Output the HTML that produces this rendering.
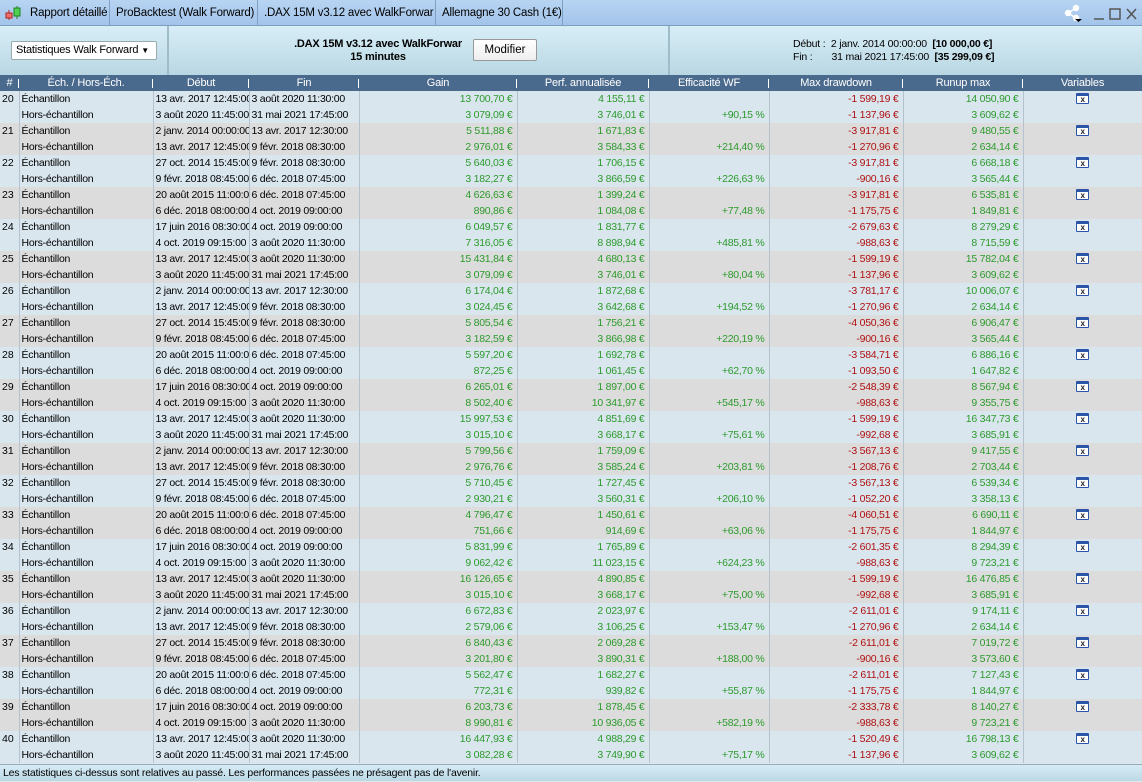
<!DOCTYPE html>
<html><head><meta charset="utf-8"><style>
*{box-sizing:border-box;margin:0;padding:0}
body{width:1142px;height:781px;overflow:hidden;font-family:"Liberation Sans",Arial,sans-serif;font-size:11px;color:#000;background:#dce8ee;position:relative}
#tabs{position:absolute;left:0;top:0;width:1142px;height:26px;background:linear-gradient(#b7d4f2,#a3c4ea);border-bottom:1px solid #7c9cc0}
.tab{position:absolute;top:0;height:25px;line-height:26px;font-size:11.5px;letter-spacing:-0.2px;white-space:nowrap;overflow:hidden;border-right:1px solid #7f9fc4;padding-left:6px;color:#000}
#panel{position:absolute;left:0;top:26px;width:1142px;height:49px;background:linear-gradient(#d8eef7,#b9d7e3)}
.pbox{position:absolute;top:0;height:49px;border-right:2px solid #9fbccb}
#sel{position:absolute;left:11px;top:15px;width:146px;height:19px;background:#fff;border:1px solid #9aa;border-radius:2px;font-size:11px;letter-spacing:-0.2px;white-space:nowrap;line-height:17px;padding-left:4px}
#btn{position:absolute;top:13px;width:64px;height:22px;background:linear-gradient(#fff,#eee);border:1px solid #999;border-radius:2px;font-size:11.5px;line-height:20px;text-align:center}
table{position:absolute;left:0;top:75px;border-collapse:collapse;table-layout:fixed;width:1142px}
th{height:16px;background:#4a6a8d;color:#fff;font-weight:normal;font-size:11px;letter-spacing:-0.2px;line-height:16px;text-align:center;position:relative;white-space:nowrap}
th:after{content:"";position:absolute;right:0;top:4px;width:1px;height:9px;background:#fff}
th:last-child:after{display:none}
td{height:16px;line-height:16px;padding:0 2px;white-space:nowrap;overflow:hidden;border-left:1px solid #b3c2cc;font-size:10.5px;letter-spacing:-0.25px}
td.r{text-align:right;padding-right:4px}
tr.a td{background:#d9e6ee}
tr.b td{background:#dcdcdc}
.g{color:#2c9a2c}.d{color:#b01010}
td.n{vertical-align:top;padding-left:2px;border-left:none;letter-spacing:0}
.ic{display:inline-block;width:13px;height:11px;border:1px solid #2b55a8;border-top:3px solid #2b55a8;background:#fff;vertical-align:middle;margin-top:-2px;font-size:8px;line-height:7px;text-align:center;font-weight:bold;color:#222;border-radius:1px;letter-spacing:0}
#foot{position:absolute;left:0;top:764px;width:1142px;height:17px;background:linear-gradient(#d6ecf6,#bcd8e6);border-top:1px solid #9ab;font-size:10.5px;letter-spacing:-0.2px;line-height:17px;padding-left:3px;white-space:nowrap}
</style></head><body>
<div id="tabs">
<svg style="position:absolute;left:4px;top:5px" width="18" height="16"><line x1="5" y1="5" x2="5" y2="15" stroke="#b02020"/><rect x="2" y="8" width="6" height="5" fill="#f07070" stroke="#b02020"/><line x1="13" y1="1" x2="13" y2="14" stroke="#208020"/><rect x="10" y="3" width="6" height="8" fill="#50d050" stroke="#208020"/></svg>
<div class="tab" style="left:24px;width:86px">Rapport détaillé</div>
<div class="tab" style="left:110px;width:148px">ProBacktest (Walk Forward)</div>
<div class="tab" style="left:258px;width:178px">.DAX 15M v3.12 avec WalkForwar</div>
<div class="tab" style="left:436px;width:127px">Allemagne 30 Cash (1€)</div>
<svg style="position:absolute;left:1064px;top:4px" width="78" height="18"><g stroke="#fff" stroke-width="1.5" fill="#fff"><line x1="4" y1="9" x2="12" y2="4"/><line x1="4" y1="9" x2="12" y2="14"/><circle cx="4" cy="9" r="2.5"/><circle cx="12" cy="4" r="2.5"/><circle cx="12" cy="14" r="2.5"/></g><path d="M11 15h7l-3.5 3z" fill="#000"/><g stroke="#555" stroke-width="1.5" fill="none"><line x1="30" y1="15" x2="40" y2="15"/><rect x="46" y="5" width="10" height="10"/><path d="M63 5l9 10M72 5l-9 10"/></g></svg>
</div>
<div id="panel">
<div class="pbox" style="left:0;width:169px"><div id="sel">Statistiques Walk Forward <span style="font-size:8px">▼</span></div></div>
<div class="pbox" style="left:169px;width:501px"><div style="position:absolute;left:116px;top:12px;width:186px;text-align:center;font-weight:bold;font-size:11px;letter-spacing:-0.2px;line-height:13px;white-space:nowrap">.DAX 15M v3.12 avec WalkForwar<br>15 minutes</div><div id="btn" style="left:304px">Modifier</div></div>
<div style="position:absolute;left:793px;top:12px;font-size:10.5px;letter-spacing:-0.2px;line-height:13px;white-space:pre">Début :  2 janv. 2014 00:00:00  <b>[10 000,00 €]</b>
Fin :       31 mai 2021 17:45:00  <b>[35 299,09 €]</b></div>
</div>
<table>
<colgroup><col style="width:19px"><col style="width:134px"><col style="width:96px"><col style="width:110px"><col style="width:158px"><col style="width:132px"><col style="width:120px"><col style="width:134px"><col style="width:120px"><col style="width:119px"></colgroup>
<tr><th>#</th><th>Éch. / Hors-Éch.</th><th>Début</th><th>Fin</th><th>Gain</th><th>Perf. annualisée</th><th>Efficacité WF</th><th>Max drawdown</th><th>Runup max</th><th>Variables</th></tr>
<tr class="a"><td class="n" rowspan="2">20</td><td>Échantillon</td><td>13 avr. 2017 12:45:00</td><td>3 août 2020 11:30:00</td><td class="r g">13 700,70 €</td><td class="r g">4 155,11 €</td><td class="r g"></td><td class="r d">-1 599,19 €</td><td class="r g">14 050,90 €</td><td style="text-align:center"><span class="ic">x</span></td></tr>
<tr class="a"><td>Hors-échantillon</td><td>3 août 2020 11:45:00</td><td>31 mai 2021 17:45:00</td><td class="r g">3 079,09 €</td><td class="r g">3 746,01 €</td><td class="r g">+90,15 %</td><td class="r d">-1 137,96 €</td><td class="r g">3 609,62 €</td><td></td></tr>
<tr class="b"><td class="n" rowspan="2">21</td><td>Échantillon</td><td>2 janv. 2014 00:00:00</td><td>13 avr. 2017 12:30:00</td><td class="r g">5 511,88 €</td><td class="r g">1 671,83 €</td><td class="r g"></td><td class="r d">-3 917,81 €</td><td class="r g">9 480,55 €</td><td style="text-align:center"><span class="ic">x</span></td></tr>
<tr class="b"><td>Hors-échantillon</td><td>13 avr. 2017 12:45:00</td><td>9 févr. 2018 08:30:00</td><td class="r g">2 976,01 €</td><td class="r g">3 584,33 €</td><td class="r g">+214,40 %</td><td class="r d">-1 270,96 €</td><td class="r g">2 634,14 €</td><td></td></tr>
<tr class="a"><td class="n" rowspan="2">22</td><td>Échantillon</td><td>27 oct. 2014 15:45:00</td><td>9 févr. 2018 08:30:00</td><td class="r g">5 640,03 €</td><td class="r g">1 706,15 €</td><td class="r g"></td><td class="r d">-3 917,81 €</td><td class="r g">6 668,18 €</td><td style="text-align:center"><span class="ic">x</span></td></tr>
<tr class="a"><td>Hors-échantillon</td><td>9 févr. 2018 08:45:00</td><td>6 déc. 2018 07:45:00</td><td class="r g">3 182,27 €</td><td class="r g">3 866,59 €</td><td class="r g">+226,63 %</td><td class="r d">-900,16 €</td><td class="r g">3 565,44 €</td><td></td></tr>
<tr class="b"><td class="n" rowspan="2">23</td><td>Échantillon</td><td>20 août 2015 11:00:00</td><td>6 déc. 2018 07:45:00</td><td class="r g">4 626,63 €</td><td class="r g">1 399,24 €</td><td class="r g"></td><td class="r d">-3 917,81 €</td><td class="r g">6 535,81 €</td><td style="text-align:center"><span class="ic">x</span></td></tr>
<tr class="b"><td>Hors-échantillon</td><td>6 déc. 2018 08:00:00</td><td>4 oct. 2019 09:00:00</td><td class="r g">890,86 €</td><td class="r g">1 084,08 €</td><td class="r g">+77,48 %</td><td class="r d">-1 175,75 €</td><td class="r g">1 849,81 €</td><td></td></tr>
<tr class="a"><td class="n" rowspan="2">24</td><td>Échantillon</td><td>17 juin 2016 08:30:00</td><td>4 oct. 2019 09:00:00</td><td class="r g">6 049,57 €</td><td class="r g">1 831,77 €</td><td class="r g"></td><td class="r d">-2 679,63 €</td><td class="r g">8 279,29 €</td><td style="text-align:center"><span class="ic">x</span></td></tr>
<tr class="a"><td>Hors-échantillon</td><td>4 oct. 2019 09:15:00</td><td>3 août 2020 11:30:00</td><td class="r g">7 316,05 €</td><td class="r g">8 898,94 €</td><td class="r g">+485,81 %</td><td class="r d">-988,63 €</td><td class="r g">8 715,59 €</td><td></td></tr>
<tr class="b"><td class="n" rowspan="2">25</td><td>Échantillon</td><td>13 avr. 2017 12:45:00</td><td>3 août 2020 11:30:00</td><td class="r g">15 431,84 €</td><td class="r g">4 680,13 €</td><td class="r g"></td><td class="r d">-1 599,19 €</td><td class="r g">15 782,04 €</td><td style="text-align:center"><span class="ic">x</span></td></tr>
<tr class="b"><td>Hors-échantillon</td><td>3 août 2020 11:45:00</td><td>31 mai 2021 17:45:00</td><td class="r g">3 079,09 €</td><td class="r g">3 746,01 €</td><td class="r g">+80,04 %</td><td class="r d">-1 137,96 €</td><td class="r g">3 609,62 €</td><td></td></tr>
<tr class="a"><td class="n" rowspan="2">26</td><td>Échantillon</td><td>2 janv. 2014 00:00:00</td><td>13 avr. 2017 12:30:00</td><td class="r g">6 174,04 €</td><td class="r g">1 872,68 €</td><td class="r g"></td><td class="r d">-3 781,17 €</td><td class="r g">10 006,07 €</td><td style="text-align:center"><span class="ic">x</span></td></tr>
<tr class="a"><td>Hors-échantillon</td><td>13 avr. 2017 12:45:00</td><td>9 févr. 2018 08:30:00</td><td class="r g">3 024,45 €</td><td class="r g">3 642,68 €</td><td class="r g">+194,52 %</td><td class="r d">-1 270,96 €</td><td class="r g">2 634,14 €</td><td></td></tr>
<tr class="b"><td class="n" rowspan="2">27</td><td>Échantillon</td><td>27 oct. 2014 15:45:00</td><td>9 févr. 2018 08:30:00</td><td class="r g">5 805,54 €</td><td class="r g">1 756,21 €</td><td class="r g"></td><td class="r d">-4 050,36 €</td><td class="r g">6 906,47 €</td><td style="text-align:center"><span class="ic">x</span></td></tr>
<tr class="b"><td>Hors-échantillon</td><td>9 févr. 2018 08:45:00</td><td>6 déc. 2018 07:45:00</td><td class="r g">3 182,59 €</td><td class="r g">3 866,98 €</td><td class="r g">+220,19 %</td><td class="r d">-900,16 €</td><td class="r g">3 565,44 €</td><td></td></tr>
<tr class="a"><td class="n" rowspan="2">28</td><td>Échantillon</td><td>20 août 2015 11:00:00</td><td>6 déc. 2018 07:45:00</td><td class="r g">5 597,20 €</td><td class="r g">1 692,78 €</td><td class="r g"></td><td class="r d">-3 584,71 €</td><td class="r g">6 886,16 €</td><td style="text-align:center"><span class="ic">x</span></td></tr>
<tr class="a"><td>Hors-échantillon</td><td>6 déc. 2018 08:00:00</td><td>4 oct. 2019 09:00:00</td><td class="r g">872,25 €</td><td class="r g">1 061,45 €</td><td class="r g">+62,70 %</td><td class="r d">-1 093,50 €</td><td class="r g">1 647,82 €</td><td></td></tr>
<tr class="b"><td class="n" rowspan="2">29</td><td>Échantillon</td><td>17 juin 2016 08:30:00</td><td>4 oct. 2019 09:00:00</td><td class="r g">6 265,01 €</td><td class="r g">1 897,00 €</td><td class="r g"></td><td class="r d">-2 548,39 €</td><td class="r g">8 567,94 €</td><td style="text-align:center"><span class="ic">x</span></td></tr>
<tr class="b"><td>Hors-échantillon</td><td>4 oct. 2019 09:15:00</td><td>3 août 2020 11:30:00</td><td class="r g">8 502,40 €</td><td class="r g">10 341,97 €</td><td class="r g">+545,17 %</td><td class="r d">-988,63 €</td><td class="r g">9 355,75 €</td><td></td></tr>
<tr class="a"><td class="n" rowspan="2">30</td><td>Échantillon</td><td>13 avr. 2017 12:45:00</td><td>3 août 2020 11:30:00</td><td class="r g">15 997,53 €</td><td class="r g">4 851,69 €</td><td class="r g"></td><td class="r d">-1 599,19 €</td><td class="r g">16 347,73 €</td><td style="text-align:center"><span class="ic">x</span></td></tr>
<tr class="a"><td>Hors-échantillon</td><td>3 août 2020 11:45:00</td><td>31 mai 2021 17:45:00</td><td class="r g">3 015,10 €</td><td class="r g">3 668,17 €</td><td class="r g">+75,61 %</td><td class="r d">-992,68 €</td><td class="r g">3 685,91 €</td><td></td></tr>
<tr class="b"><td class="n" rowspan="2">31</td><td>Échantillon</td><td>2 janv. 2014 00:00:00</td><td>13 avr. 2017 12:30:00</td><td class="r g">5 799,56 €</td><td class="r g">1 759,09 €</td><td class="r g"></td><td class="r d">-3 567,13 €</td><td class="r g">9 417,55 €</td><td style="text-align:center"><span class="ic">x</span></td></tr>
<tr class="b"><td>Hors-échantillon</td><td>13 avr. 2017 12:45:00</td><td>9 févr. 2018 08:30:00</td><td class="r g">2 976,76 €</td><td class="r g">3 585,24 €</td><td class="r g">+203,81 %</td><td class="r d">-1 208,76 €</td><td class="r g">2 703,44 €</td><td></td></tr>
<tr class="a"><td class="n" rowspan="2">32</td><td>Échantillon</td><td>27 oct. 2014 15:45:00</td><td>9 févr. 2018 08:30:00</td><td class="r g">5 710,45 €</td><td class="r g">1 727,45 €</td><td class="r g"></td><td class="r d">-3 567,13 €</td><td class="r g">6 539,34 €</td><td style="text-align:center"><span class="ic">x</span></td></tr>
<tr class="a"><td>Hors-échantillon</td><td>9 févr. 2018 08:45:00</td><td>6 déc. 2018 07:45:00</td><td class="r g">2 930,21 €</td><td class="r g">3 560,31 €</td><td class="r g">+206,10 %</td><td class="r d">-1 052,20 €</td><td class="r g">3 358,13 €</td><td></td></tr>
<tr class="b"><td class="n" rowspan="2">33</td><td>Échantillon</td><td>20 août 2015 11:00:00</td><td>6 déc. 2018 07:45:00</td><td class="r g">4 796,47 €</td><td class="r g">1 450,61 €</td><td class="r g"></td><td class="r d">-4 060,51 €</td><td class="r g">6 690,11 €</td><td style="text-align:center"><span class="ic">x</span></td></tr>
<tr class="b"><td>Hors-échantillon</td><td>6 déc. 2018 08:00:00</td><td>4 oct. 2019 09:00:00</td><td class="r g">751,66 €</td><td class="r g">914,69 €</td><td class="r g">+63,06 %</td><td class="r d">-1 175,75 €</td><td class="r g">1 844,97 €</td><td></td></tr>
<tr class="a"><td class="n" rowspan="2">34</td><td>Échantillon</td><td>17 juin 2016 08:30:00</td><td>4 oct. 2019 09:00:00</td><td class="r g">5 831,99 €</td><td class="r g">1 765,89 €</td><td class="r g"></td><td class="r d">-2 601,35 €</td><td class="r g">8 294,39 €</td><td style="text-align:center"><span class="ic">x</span></td></tr>
<tr class="a"><td>Hors-échantillon</td><td>4 oct. 2019 09:15:00</td><td>3 août 2020 11:30:00</td><td class="r g">9 062,42 €</td><td class="r g">11 023,15 €</td><td class="r g">+624,23 %</td><td class="r d">-988,63 €</td><td class="r g">9 723,21 €</td><td></td></tr>
<tr class="b"><td class="n" rowspan="2">35</td><td>Échantillon</td><td>13 avr. 2017 12:45:00</td><td>3 août 2020 11:30:00</td><td class="r g">16 126,65 €</td><td class="r g">4 890,85 €</td><td class="r g"></td><td class="r d">-1 599,19 €</td><td class="r g">16 476,85 €</td><td style="text-align:center"><span class="ic">x</span></td></tr>
<tr class="b"><td>Hors-échantillon</td><td>3 août 2020 11:45:00</td><td>31 mai 2021 17:45:00</td><td class="r g">3 015,10 €</td><td class="r g">3 668,17 €</td><td class="r g">+75,00 %</td><td class="r d">-992,68 €</td><td class="r g">3 685,91 €</td><td></td></tr>
<tr class="a"><td class="n" rowspan="2">36</td><td>Échantillon</td><td>2 janv. 2014 00:00:00</td><td>13 avr. 2017 12:30:00</td><td class="r g">6 672,83 €</td><td class="r g">2 023,97 €</td><td class="r g"></td><td class="r d">-2 611,01 €</td><td class="r g">9 174,11 €</td><td style="text-align:center"><span class="ic">x</span></td></tr>
<tr class="a"><td>Hors-échantillon</td><td>13 avr. 2017 12:45:00</td><td>9 févr. 2018 08:30:00</td><td class="r g">2 579,06 €</td><td class="r g">3 106,25 €</td><td class="r g">+153,47 %</td><td class="r d">-1 270,96 €</td><td class="r g">2 634,14 €</td><td></td></tr>
<tr class="b"><td class="n" rowspan="2">37</td><td>Échantillon</td><td>27 oct. 2014 15:45:00</td><td>9 févr. 2018 08:30:00</td><td class="r g">6 840,43 €</td><td class="r g">2 069,28 €</td><td class="r g"></td><td class="r d">-2 611,01 €</td><td class="r g">7 019,72 €</td><td style="text-align:center"><span class="ic">x</span></td></tr>
<tr class="b"><td>Hors-échantillon</td><td>9 févr. 2018 08:45:00</td><td>6 déc. 2018 07:45:00</td><td class="r g">3 201,80 €</td><td class="r g">3 890,31 €</td><td class="r g">+188,00 %</td><td class="r d">-900,16 €</td><td class="r g">3 573,60 €</td><td></td></tr>
<tr class="a"><td class="n" rowspan="2">38</td><td>Échantillon</td><td>20 août 2015 11:00:00</td><td>6 déc. 2018 07:45:00</td><td class="r g">5 562,47 €</td><td class="r g">1 682,27 €</td><td class="r g"></td><td class="r d">-2 611,01 €</td><td class="r g">7 127,43 €</td><td style="text-align:center"><span class="ic">x</span></td></tr>
<tr class="a"><td>Hors-échantillon</td><td>6 déc. 2018 08:00:00</td><td>4 oct. 2019 09:00:00</td><td class="r g">772,31 €</td><td class="r g">939,82 €</td><td class="r g">+55,87 %</td><td class="r d">-1 175,75 €</td><td class="r g">1 844,97 €</td><td></td></tr>
<tr class="b"><td class="n" rowspan="2">39</td><td>Échantillon</td><td>17 juin 2016 08:30:00</td><td>4 oct. 2019 09:00:00</td><td class="r g">6 203,73 €</td><td class="r g">1 878,45 €</td><td class="r g"></td><td class="r d">-2 333,78 €</td><td class="r g">8 140,27 €</td><td style="text-align:center"><span class="ic">x</span></td></tr>
<tr class="b"><td>Hors-échantillon</td><td>4 oct. 2019 09:15:00</td><td>3 août 2020 11:30:00</td><td class="r g">8 990,81 €</td><td class="r g">10 936,05 €</td><td class="r g">+582,19 %</td><td class="r d">-988,63 €</td><td class="r g">9 723,21 €</td><td></td></tr>
<tr class="a"><td class="n" rowspan="2">40</td><td>Échantillon</td><td>13 avr. 2017 12:45:00</td><td>3 août 2020 11:30:00</td><td class="r g">16 447,93 €</td><td class="r g">4 988,29 €</td><td class="r g"></td><td class="r d">-1 520,49 €</td><td class="r g">16 798,13 €</td><td style="text-align:center"><span class="ic">x</span></td></tr>
<tr class="a"><td>Hors-échantillon</td><td>3 août 2020 11:45:00</td><td>31 mai 2021 17:45:00</td><td class="r g">3 082,28 €</td><td class="r g">3 749,90 €</td><td class="r g">+75,17 %</td><td class="r d">-1 137,96 €</td><td class="r g">3 609,62 €</td><td></td></tr>
</table>
<div id="foot">Les statistiques ci-dessus sont relatives au passé. Les performances passées ne présagent pas de l'avenir.</div>
</body></html>
